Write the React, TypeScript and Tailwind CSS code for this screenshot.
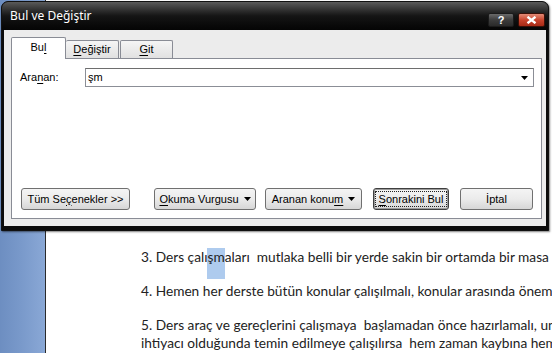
import React from "react";

const ui = { fontFamily: '"Liberation Sans", Arial, sans-serif' };

// access key underline helper
const U = ({ children }: { children: React.ReactNode }) => (
  <span className="underline underline-offset-[2px]">{children}</span>
);

const Caret = () => (
  <svg width="7" height="4" viewBox="0 0 7 4" className="ml-[5px]">
    <path d="M0 0h7L3.5 4z" fill="#000" />
  </svg>
);

interface BtnProps {
  children: React.ReactNode;
  className?: string;
  primary?: boolean;
}

const Btn = ({ children, className = "", primary }: BtnProps) => (
  <div
    className={`h-[22px] flex items-center justify-center rounded-[3px] border text-[11px] text-black bg-gradient-to-b from-[#f4f4f4] via-[#ebebeb] to-[#d6d6d6] ${
      primary ? "border-[#3f3f3f] shadow-[inset_0_0_0_1px_#9a9a9a]" : "border-[#707070]"
    } ${className}`}
  >
    {primary ? (
      <span className="flex h-[16px] items-center px-[3px] border border-dotted border-[#222]">
        {children}
      </span>
    ) : (
      children
    )}
  </div>
);

const Dialog = () => (
  <div
    className="absolute left-[1px] top-[1px] w-[548px] h-[230px] flex flex-col rounded-t-[7px] border border-[#111] bg-[#0c0c0c] shadow-[1px_1px_2px_rgba(0,0,0,0.5)]"
    style={ui}
  >
    {/* title bar */}
    <div className="h-[28px] flex items-center justify-between rounded-t-[6px] bg-gradient-to-b from-[#5a5a5a] via-[#151515] to-[#050505] pl-[8px] pr-[3px]">
      <span
        className="text-white text-[12px]"
        style={{ fontFamily: '"Noto Sans", "Open Sans", sans-serif' }}
      >
        Bul ve Değiştir
      </span>
      <div className="flex items-start gap-[4px] self-start mt-[11px]">
        <div className="w-[26px] h-[14px] flex items-center justify-center rounded-[2px] border border-[#1b1b1b] bg-gradient-to-b from-[#6a6a6a] via-[#3c3c3c] to-[#2a2a2a] text-white text-[11px] font-bold leading-none">
          ?
        </div>
        <div className="w-[27px] h-[14px] flex items-center justify-center rounded-[2px] border border-[#3a1008] bg-gradient-to-b from-[#e28a76] via-[#c8432c] to-[#a82a16]">
          <svg width="11" height="8" viewBox="0 0 11 8">
            <path d="M1.5 0.8L9.5 7.2M9.5 0.8L1.5 7.2" stroke="#fff" strokeWidth="2.4" />
          </svg>
        </div>
      </div>
    </div>

    {/* body */}
    <div className="flex-1 mx-[2px] mb-[4px] bg-[#ececec] pt-[7px] pl-[7px] pr-[4px] pb-[7px] flex flex-col">
      {/* tabs */}
      <div className="relative z-10 h-[21px] flex items-end text-[11px] text-black">
        <div className="h-[22px] -mb-px w-[55px] flex items-center justify-center pb-[2px] bg-white border border-b-0 border-[#898c95] rounded-t-[2px]">
          Bu<U>l</U>
        </div>
        <div className="h-[18px] w-[53px] flex items-center justify-center border border-b-0 border-l-0 border-[#898c95] rounded-t-[2px] bg-gradient-to-b from-[#f5f5f5] to-[#e1e1e1]">
          <U>D</U>eğiştir
        </div>
        <div className="h-[18px] w-[53px] ml-[1px] flex items-center justify-center border border-b-0 border-[#898c95] rounded-t-[2px] bg-gradient-to-b from-[#f5f5f5] to-[#e1e1e1]">
          <U>G</U>it
        </div>
      </div>

      {/* tab page */}
      <div className="flex-1 bg-white border border-[#898c95] flex flex-col justify-between pt-[9px] pl-[8px] pr-[7px] pb-[8px]">
        <div className="flex items-center text-[11px] text-black">
          <span className="w-[65px]">
            Ara<U>n</U>an:
          </span>
          <div className="flex-1 h-[19px] flex items-center justify-between border border-[#8b8e96] border-t-[#6e6e6e] pl-[2px] pr-[5px] bg-white">
            <span>şm</span>
            <svg width="7" height="4" viewBox="0 0 7 4">
              <path d="M0 0h7L3.5 4z" fill="#000" />
            </svg>
          </div>
        </div>

        <div className="flex items-center pl-[1px]">
          <Btn className="w-[109px]">
            Tüm Se<U>ç</U>enekler &gt;&gt;
          </Btn>
          <Btn className="w-[102px] ml-[24px]">
            <U>O</U>kuma Vurgusu
            <Caret />
          </Btn>
          <Btn className="w-[97px] ml-[9px]">
            Aranan konu<U>m</U>
            <Caret />
          </Btn>
          <Btn className="w-[76px] ml-[11px]" primary>
            <U>S</U>onrakini Bul
          </Btn>
          <Btn className="w-[73px] ml-[11px]">İptal</Btn>
        </div>
      </div>
    </div>
  </div>
);

export default function App() {
  return (
    <div className="relative w-[552px] h-[353px] overflow-hidden bg-white flex">
      {/* document behind the dialog */}
      <div className="w-[46px] shrink-0 h-full border-r border-[#2b2b2b] bg-gradient-to-r from-[#6d8ec1] via-[#7a9acb] to-[#8aa8d6]" />
      <div
        className="flex-1 min-w-0 bg-white pl-[95px] pt-[248px] text-[13.7px] leading-[18px] text-[#222] whitespace-nowrap"
        style={{ fontFamily: 'Lato, "Open Sans", sans-serif' }}
      >
        <p>
          3. Ders çalı
          <span className="bg-[#aecbee] pb-[14px]">şm</span>
          aları&nbsp; mutlaka belli bir yerde sakin bir ortamda bir masa
        </p>
        <p className="mt-[16px]">
          4. Hemen her derste bütün konular çalışılmalı, konular arasında önem
        </p>
        <p className="mt-[16px]">
          5. Ders araç ve gereçlerini çalışmaya&nbsp; başlamadan önce hazırlamalı, un
        </p>
        <p>ihtiyacı olduğunda temin edilmeye çalışılırsa&nbsp; hem zaman kaybına hem</p>
      </div>
      <Dialog />
    </div>
  );
}
